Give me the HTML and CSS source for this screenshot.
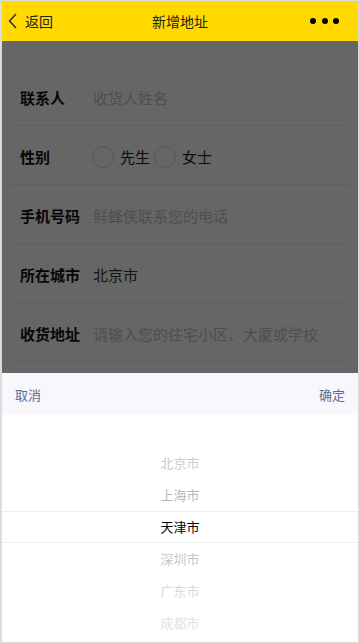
FILE: index.html
```html
<!DOCTYPE html>
<html lang="zh">
<head>
  <meta charset="UTF-8" />
  <meta name="viewport" content="width=device-width, initial-scale=1.0"/>
  <title>新增地址</title>
  <link rel="stylesheet" href="styles.css">
</head>
<body>
  <div class="app">
    <header class="topbar">
      <a class="back" href="#">
        <svg width="9" height="16" viewBox="0 0 9 16"><path d="M8 1 L1.5 8 L8 15" fill="none" stroke="#222" stroke-width="1.3"/></svg>
        <span>返回</span>
      </a>
      <span class="title">新增地址</span>
      <span class="more"><i></i><i></i><i></i></span>
    </header>

    <main class="content">
      <form class="addr-form">
        <div class="row"><label>联系人</label><input placeholder="收货人姓名"></div>
        <div class="row">
          <label>性别</label>
          <div class="radios">
            <span class="radio"><i></i>先生</span>
            <span class="radio"><i></i>女士</span>
          </div>
        </div>
        <div class="row"><label>手机号码</label><input placeholder="鲜蜂侠联系您的电话"></div>
        <div class="row"><label>所在城市</label><input value="北京市"></div>
        <div class="row"><label>收货地址</label><input placeholder="请输入您的住宅小区、大厦或学校"></div>
      </form>
      <div class="mask"></div>
    </main>

    <section class="picker">
      <div class="picker-bar"><span>取消</span><span>确定</span></div>
      <ul class="picker-list">
        <li></li>
        <li class="far2">北京市</li>
        <li class="far1">上海市</li>
        <li class="active">天津市</li>
        <li class="far1b">深圳市</li>
        <li class="far2b">广东市</li>
        <li class="far3">成都市</li>
      </ul>
    </section>
  </div>
</body>
</html>
```

FILE: styles.css
```css
*{box-sizing:border-box;}
body{margin:0;font-family:"Noto Sans CJK SC","Noto Sans",sans-serif;background:#fff;color:#111;}
.app{width:359px;height:643px;border:1px solid #dcdcdc;border-left-width:2px;display:flex;flex-direction:column;overflow:hidden;}

/* Header */
.topbar{height:40px;background:#ffd900;display:grid;grid-template-columns:1fr auto 1fr;align-items:center;padding:0 6px;flex:none;}
.back{display:flex;align-items:center;gap:8px;color:#222;text-decoration:none;font-size:14px;}
.title{font-size:14px;color:#222;}
.more{justify-self:end;display:flex;gap:5.5px;margin-right:13px;}
.more i{width:6px;height:6px;border-radius:50%;background:#000;display:block;}

/* Form */
.content{flex:1;position:relative;}
.addr-form{padding-top:26px;}
.row{height:59px;margin:0 8px;padding:3px 10px 0;border-bottom:1px solid #eee;display:flex;align-items:center;}
.row label{width:73px;flex:none;font-size:15px;font-weight:700;color:#111;}
.row input{flex:1;min-width:0;border:none;background:none;outline:none;font:inherit;font-size:15px;color:#333;padding:0;}
.row input::placeholder{color:#c4c4c4;}
.radios{display:flex;align-items:center;gap:4px;margin-left:-1px;}
.radio{display:flex;align-items:center;gap:6px;font-size:15px;color:#222;}
.radio i{width:22px;height:22px;border:1px solid #d8d8d8;border-radius:50%;display:block;}
.mask{position:absolute;inset:0;background:rgba(0,0,0,0.6);}

/* Picker */
.picker{flex:none;height:269px;background:#fff;}
.picker-bar{height:42px;background:#f8f7fc;display:flex;justify-content:space-between;align-items:center;padding:0 13px;font-size:13px;color:#576b95;}
.picker-list{list-style:none;margin:0;padding:0;}
.picker-list li{height:32px;line-height:32px;text-align:center;font-size:13px;color:#c8c8c8;}
.picker-list li.far1{color:#b8b8b8;}
.picker-list li.far2{color:#cbcbcb;}
.picker-list li.active{color:#000;border-top:1px solid #eee;border-bottom:1px solid #eee;line-height:30px;}
.picker-list li.far1b{color:#c6c6c6;}
.picker-list li.far2b{color:#d9d9d9;}
.picker-list li.far3{color:#e2e2e2;}
```
